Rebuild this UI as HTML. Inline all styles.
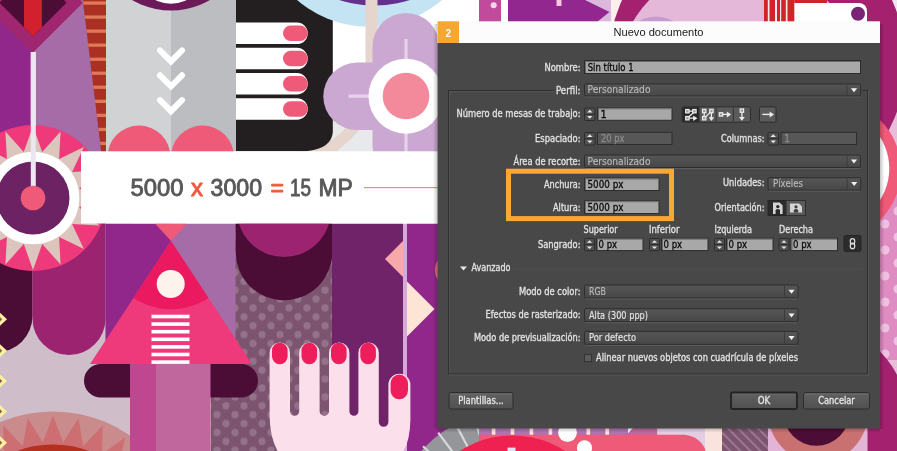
<!DOCTYPE html><html><head><meta charset="utf-8"><title>Nuevo documento</title>
<style>html,body{margin:0;padding:0;background:#fff;overflow:hidden}svg{display:block;will-change:transform}text{font-family:"Liberation Sans",sans-serif}text.d{font-family:"DejaVu Sans Condensed","DejaVu Sans","Liberation Sans",sans-serif}</style></head><body>
<svg width="897" height="451" viewBox="0 0 897 451">
<defs>
<pattern id="dots" x="235" y="290.1" width="18" height="17.8" patternUnits="userSpaceOnUse">
<rect width="18" height="17.8" fill="#7d546f"/><circle cx="9" cy="8.9" r="3.6" fill="#93728a"/><circle cx="0" cy="0" r="3.6" fill="#93728a"/><circle cx="18" cy="0" r="3.6" fill="#93728a"/><circle cx="0" cy="17.8" r="3.6" fill="#93728a"/><circle cx="18" cy="17.8" r="3.6" fill="#93728a"/>
</pattern>
<pattern id="pdots" x="880" y="222" width="26" height="26" patternUnits="userSpaceOnUse">
<rect width="26" height="26" fill="#df8cc3"/><circle cx="5" cy="2" r="4.5" fill="#efc1e0"/><circle cx="5" cy="28" r="4.5" fill="#efc1e0"/><circle cx="18" cy="15" r="4.5" fill="#efc1e0"/>
</pattern>
<pattern id="diag" x="722" y="428" width="7.1" height="7.1" patternUnits="userSpaceOnUse" patternTransform="rotate(-45)">
<rect width="7.1" height="7.1" fill="#7d546f"/><rect width="2" height="7.1" fill="#9a7890"/>
</pattern>
<linearGradient id="dd" x1="0" y1="0" x2="0" y2="1"><stop offset="0" stop-color="#565656"/><stop offset="1" stop-color="#474747"/></linearGradient>
<linearGradient id="btn" x1="0" y1="0" x2="0" y2="1"><stop offset="0" stop-color="#606060"/><stop offset="1" stop-color="#515151"/></linearGradient>
<linearGradient id="shl" x1="0" y1="0" x2="1" y2="0"><stop offset="0" stop-color="#000" stop-opacity="0"/><stop offset="1" stop-color="#000" stop-opacity="0.22"/></linearGradient>
<linearGradient id="shr" x1="1" y1="0" x2="0" y2="0"><stop offset="0" stop-color="#000" stop-opacity="0"/><stop offset="1" stop-color="#000" stop-opacity="0.22"/></linearGradient>
<linearGradient id="shb" x1="0" y1="1" x2="0" y2="0"><stop offset="0" stop-color="#000" stop-opacity="0"/><stop offset="1" stop-color="#000" stop-opacity="0.22"/></linearGradient>
<clipPath id="cv"><rect x="0" y="0" width="897" height="451"/></clipPath>
</defs>
<g clip-path="url(#cv)">
<rect width="897" height="451" fill="#ffffff"/>
<rect x="0" y="0" width="106" height="224" fill="#91278b"/>
<polygon points="33,0 84,0 106,191 106,224 33,224" fill="#a56ca8"/>
<polygon points="82.8,0 106,0 106,191" fill="#a93023"/>
<clipPath id="cs"><polygon points="82.8,0 106,0 106,191"/></clipPath><g clip-path="url(#cs)" fill="#e0785a">
<rect x="80" y="1.4" width="30" height="3.3"/>
<rect x="80" y="15.4" width="30" height="3.3"/>
<rect x="80" y="29.5" width="30" height="3.3"/>
<rect x="80" y="43.5" width="30" height="3.3"/>
<rect x="80" y="57.6" width="30" height="3.3"/>
<rect x="80" y="71.6" width="30" height="3.3"/>
<rect x="80" y="85.6" width="30" height="3.3"/>
<rect x="80" y="99.7" width="30" height="3.3"/>
<rect x="80" y="113.7" width="30" height="3.3"/>
<rect x="80" y="127.8" width="30" height="3.3"/>
<rect x="80" y="141.8" width="30" height="3.3"/>
<rect x="80" y="155.8" width="30" height="3.3"/>
<rect x="80" y="169.9" width="30" height="3.3"/>
<rect x="80" y="183.9" width="30" height="3.3"/>
</g>
<rect x="30.8" y="52" width="5" height="140" fill="#ece6f0"/>
<polygon points="33,52.6 82.9,2.7 33,-47 -17.5,2.7" fill="#a0266f"/>
<polygon points="33,36.2 66.5,2.7 33,-31 -0.5,2.7" fill="#4b0d35"/>
<polygon points="24,0 41.9,0 41.9,27.3 33,36.2 24,27.2" fill="#d2202e"/>
<rect x="106" y="0" width="65" height="152" fill="#d1d2d4"/>
<rect x="171" y="0" width="65" height="152" fill="#bcbdc0"/>
<circle cx="171" cy="-67.9" r="78.3" fill="#6d1a5b"/>
<circle cx="171" cy="-31.7" r="35.4" fill="#ffffff"/>
<polyline points="160,50.4 171,61.4 182,50.4" fill="none" stroke="#fff" stroke-width="6" stroke-linecap="round" stroke-linejoin="miter"/>
<polyline points="160,75.3 171,86.3 182,75.3" fill="none" stroke="#fff" stroke-width="6" stroke-linecap="round" stroke-linejoin="miter"/>
<polyline points="160,100.2 171,111.2 182,100.2" fill="none" stroke="#fff" stroke-width="6" stroke-linecap="round" stroke-linejoin="miter"/>
<circle cx="139" cy="157" r="31.5" fill="#ee5a77"/>
<circle cx="202.5" cy="157" r="31.5" fill="#ee5a77"/>
<rect x="310" y="116" width="70" height="36" fill="#e8e9ea"/>
<path d="M347,126 L363,126 Q351,140 336.5,151.8 L300,151.8 Q332,146 347,126 Z" fill="#e5d5cc"/>
<path d="M236,0 H332.8 V131 C332.8,143 322,151.3 300,151.3 H236 Z" fill="#231f20"/>
<path d="M236,22.6 H297 a10.75 10.75 0 0 1 0 21.5 H236 Z" fill="#fff"/>
<rect x="283" y="25.6" width="24.7" height="15.5" rx="7.75" fill="#ee5a77"/>
<path d="M236,47.8 H297 a10.75 10.75 0 0 1 0 21.5 H236 Z" fill="#fff"/>
<rect x="283" y="50.8" width="24.7" height="15.5" rx="7.75" fill="#ee5a77"/>
<path d="M236,73.0 H297 a10.75 10.75 0 0 1 0 21.5 H236 Z" fill="#fff"/>
<rect x="283" y="76.0" width="24.7" height="15.5" rx="7.75" fill="#ee5a77"/>
<path d="M236,98.2 H297 a10.75 10.75 0 0 1 0 21.5 H236 Z" fill="#fff"/>
<rect x="283" y="101.2" width="24.7" height="15.5" rx="7.75" fill="#ee5a77"/>
<circle cx="369.5" cy="-83.8" r="110.8" fill="#c5e4f3"/>
<circle cx="374.5" cy="-111.8" r="117.3" fill="#65318f"/>
<rect x="365.5" y="0" width="12" height="70" fill="#e5d5cc"/>
<rect x="372.5" y="13" width="67" height="166.6" rx="33.5" fill="#cba8d2"/>
<rect x="323.3" y="62.6" width="166" height="67.4" rx="33.7" fill="#cba8d2"/>
<rect x="404.4" y="39" width="3.2" height="130" fill="#e6d3ea"/>
<rect x="348.6" y="94.5" width="30" height="3.3" fill="#e6d3ea"/>
<circle cx="406" cy="96.2" r="37.5" fill="#fff"/>
<circle cx="406" cy="96" r="23.3" fill="#f38a9c"/>
<rect x="479" y="0" width="22" height="22" fill="#c04a9b"/><circle cx="493.7" cy="5.2" r="3" fill="#f5d5e8"/>
<rect x="585" y="0" width="26" height="22" fill="#dcb8dc"/>
<polygon points="508,0 585,0 609.5,12 597,22 508,22" fill="#92278f"/>
<rect x="556.5" y="0" width="5" height="6" fill="#f9c6dc"/>
<rect x="611" y="0" width="30" height="22" fill="#fdf0ec"/>
<rect x="880" y="0" width="17" height="451" fill="#e7bcd9"/>
<rect x="885" y="0" width="12" height="20" fill="#f3e6ee"/>
<circle cx="757" cy="62" r="148.5" fill="#a3216e"/>
<circle cx="738" cy="84" r="122.2" fill="#e4b8d8"/>
<circle cx="656" cy="52" r="35.5" fill="#c89bcf"/>
<rect x="764" y="0" width="30.5" height="22" fill="#d2232a"/>
<rect x="767.8" y="0" width="1.7" height="22" fill="#fbe9e6"/>
<rect x="775.0" y="0" width="2.0" height="22" fill="#fbe9e6"/>
<rect x="780.0" y="0" width="1.2" height="22" fill="#fbe9e6"/>
<rect x="785.8" y="0" width="1.7" height="22" fill="#fbe9e6"/>
<rect x="794.5" y="0" width="32.5" height="3" fill="#d2232a"/>
<path d="M794.5,3 H859 a8 8 0 0 1 8 8 V22 H794.5 Z" fill="#fff"/>
<circle cx="858" cy="13.7" r="7" fill="#7a2476"/>
<rect x="878" y="160" width="19" height="200" fill="url(#pdots)"/>
<circle cx="831" cy="170" r="70" fill="#ee5a77"/>
<circle cx="831" cy="168.5" r="58.3" fill="#fff"/>
<circle cx="817" cy="416" r="90" fill="#a3216e"/>
<rect x="767.5" y="420" width="100" height="31" fill="#e4b3d8"/>
<circle cx="818" cy="412.7" r="49.9" fill="#c97070"/>
<circle cx="816.4" cy="412.7" r="33.1" fill="#4b0d35"/>
<rect x="0" y="223.5" width="131" height="228" fill="#cfbdca"/>
<clipPath id="cl"><rect x="0" y="0" width="106" height="451"/></clipPath><g clip-path="url(#cl)">
<path d="M-40,223 H32.5 V316 A36.25 36.25 0 0 1 -40 316 Z" fill="#4b0d35"/>
<path d="M32.5,223 H105.5 V318.5 A36.5 36.5 0 0 1 32.5 318.5 Z" fill="#9c2370"/>
<circle cx="33" cy="198" r="73" fill="#ee3a7b"/>
<polygon points="33.0,126.0 42.2,151.9 60.6,131.5 59.1,158.9 83.9,147.1 72.1,171.9 99.5,170.4 79.1,188.8 105.0,198.0 79.1,207.2 99.5,225.6 72.1,224.1 83.9,248.9 59.1,237.1 60.6,264.5 42.2,244.1 33.0,270.0 23.8,244.1 5.4,264.5 6.9,237.1 -17.9,248.9 -6.1,224.1 -33.5,225.6 -13.1,207.2 -39.0,198.0 -13.1,188.8 -33.5,170.4 -6.1,171.9 -17.9,147.1 6.9,158.9 5.4,131.5 23.8,151.9" fill="#dcc5bc"/>
<circle cx="33" cy="198" r="46.3" fill="#fff"/>
<circle cx="33" cy="198" r="36.5" fill="#6d2263"/>
<rect x="30.8" y="52" width="5" height="140" fill="#ece6f0"/>
<circle cx="33" cy="198" r="12.3" fill="#ee5a77"/>
</g>
<circle cx="53" cy="545.7" r="134.3" fill="#c98b8b"/>
<polygon points="53.0,415.7 63.2,442.2 78.4,418.2 83.2,446.2 102.7,425.6 102.0,454.0 125.2,437.6 119.0,465.3 144.9,453.8 133.4,479.7 161.1,473.5 144.7,496.7 173.1,496.0 152.5,515.5 180.5,520.3 156.5,535.5 183.0,545.7 156.5,555.9 180.5,571.1 152.5,575.9 173.1,595.4 144.7,594.7 161.1,617.9 133.4,611.7 144.9,637.6 119.0,626.1 125.2,653.8 102.0,637.4 102.7,665.8 83.2,645.2 78.4,673.2 63.2,649.2 53.0,675.7 42.8,649.2 27.6,673.2 22.8,645.2 3.3,665.8 4.0,637.4 -19.2,653.8 -13.0,626.1 -38.9,637.6 -27.4,611.7 -55.1,617.9 -38.7,594.7 -67.1,595.4 -46.5,575.9 -74.5,571.1 -50.5,555.9 -77.0,545.7 -50.5,535.5 -74.5,520.3 -46.5,515.5 -67.1,496.0 -38.7,496.7 -55.1,473.5 -27.4,479.7 -38.9,453.8 -13.0,465.3 -19.2,437.6 4.0,454.0 3.3,425.6 22.8,446.2 27.6,418.2 42.8,442.2" fill="#cd6e73"/>
<circle cx="53" cy="545.7" r="101.3" fill="#b5301f"/>
<polygon points="-7,319.3 0,312.8 7,319.3 0,325.8" fill="#fbf0a0"/>
<polygon points="-2.2,319.3 0,317.1 2.2,319.3 0,321.5" fill="#8a5a4e"/>
<polygon points="-7,350.7 0,344.2 7,350.7 0,357.2" fill="#fbf0a0"/>
<polygon points="-2.2,350.7 0,348.5 2.2,350.7 0,352.9" fill="#8a5a4e"/>
<polygon points="-7,381.0 0,374.5 7,381.0 0,387.5" fill="#fbf0a0"/>
<polygon points="-2.2,381.0 0,378.8 2.2,381.0 0,383.2" fill="#8a5a4e"/>
<polygon points="-7,411.4 0,404.9 7,411.4 0,417.9" fill="#fbf0a0"/>
<polygon points="-2.2,411.4 0,409.2 2.2,411.4 0,413.6" fill="#8a5a4e"/>
<polygon points="-7,442.8 0,436.3 7,442.8 0,449.3" fill="#fbf0a0"/>
<polygon points="-2.2,442.8 0,440.6 2.2,442.8 0,445.0" fill="#8a5a4e"/>
<rect x="105.5" y="223.5" width="66" height="160" fill="#91278b"/>
<rect x="171" y="223.5" width="65" height="160" fill="#a56ca8"/>
<rect x="210.5" y="380" width="30" height="71" fill="url(#dots)"/>
<rect x="235.5" y="223.5" width="96.5" height="228" fill="url(#dots)"/>
<polygon points="155,223.5 187,223.5 171,241" fill="#ee5a77"/>
<clipPath id="ct"><polygon points="171,241 252,364 90,364"/></clipPath>
<polygon points="171,241 252,364 90,364" fill="#ee3a7b"/>
<circle cx="171" cy="241" r="68.3" fill="#eb1a60" clip-path="url(#ct)"/>
<circle cx="170.7" cy="284" r="14" fill="#fdf3ec"/>
<rect x="151.5" y="314.7" width="38" height="3.6" fill="#fff"/>
<rect x="151.5" y="322.3" width="38" height="3.6" fill="#fff"/>
<rect x="151.5" y="329.9" width="38" height="3.6" fill="#fff"/>
<rect x="151.5" y="337.5" width="38" height="3.6" fill="#fff"/>
<rect x="151.5" y="345.1" width="38" height="3.6" fill="#fff"/>
<rect x="151.5" y="352.7" width="38" height="3.6" fill="#fff"/>
<rect x="151.5" y="360.3" width="38" height="3.6" fill="#fff"/>
<rect x="84" y="364" width="174" height="33.5" rx="16.75" fill="#4b0d35"/>
<rect x="130" y="364" width="26" height="87" fill="#bf4790"/>
<rect x="156" y="364" width="54.5" height="87" fill="#c0689e"/>
<clipPath id="cp"><rect x="235.5" y="223.5" width="96.5" height="228"/></clipPath><g clip-path="url(#cp)">
<circle cx="284" cy="252" r="48.3" fill="#4b0d35"/><rect x="235.5" y="223" width="96.5" height="29" fill="#4b0d35"/>
<circle cx="284" cy="210" r="47" fill="#9c2370"/></g>
<rect x="332" y="223.5" width="71" height="228" fill="#71236a"/>
<rect x="403" y="223.5" width="4" height="228" fill="#d5a9d8"/>
<rect x="407" y="223.5" width="50" height="228" fill="#91278b"/>
<polygon points="403,241 385,259 403,277" fill="#f7a8a8"/>
<polygon points="407,281.5 434.5,309 407,336.5" fill="#fde4d4"/>
<circle cx="453" cy="270" r="18" fill="#e9717a"/>
<circle cx="512.5" cy="532" r="122" fill="#959699"/>
<line x1="435.0" y1="478.8" x2="410.3" y2="461.8" stroke="#d8d8db" stroke-width="2.2"/>
<line x1="444.7" y1="466.9" x2="423.0" y2="446.2" stroke="#d8d8db" stroke-width="2.2"/>
<line x1="456.2" y1="456.7" x2="438.2" y2="432.7" stroke="#d8d8db" stroke-width="2.2"/>
<line x1="468.7" y1="448.8" x2="454.7" y2="422.3" stroke="#d8d8db" stroke-width="2.2"/>
<line x1="482.5" y1="442.9" x2="472.9" y2="414.5" stroke="#d8d8db" stroke-width="2.2"/>
<line x1="497.1" y1="439.3" x2="492.2" y2="409.7" stroke="#d8d8db" stroke-width="2.2"/>
<path d="M269.6,352.8 a10.2 10.2 0 0 1 20.4 0 V411.2 a4.6 4.6 0 0 0 9.2 0 V352.8 a10.2 10.2 0 0 1 20.4 0 V411.2 a4.7 4.7 0 0 0 9.4 0 V352.8 a10.2 10.2 0 0 1 20.4 0 V411.2 a4.5 4.5 0 0 0 9 0 V352.8 a10.2 10.2 0 0 1 20.4 0 V422 a4.8 4.8 0 0 0 9.6 0 V384.7 a11 11 0 0 1 22 0 V420 Q410,440 403.5,451 H277.5 Q269.6,436 269.6,415 Z" fill="#fbe0ec"/>
<rect x="272.0" y="342.8" width="15.6" height="21.5" rx="7.8" fill="#ee1e5c"/>
<rect x="301.5" y="342.8" width="15.6" height="21.5" rx="7.8" fill="#ee1e5c"/>
<rect x="331.0" y="342.8" width="15.6" height="21.5" rx="7.8" fill="#ee1e5c"/>
<rect x="360.3" y="342.8" width="15.6" height="21.5" rx="7.8" fill="#ee1e5c"/>
<rect x="390.6" y="374.6" width="17.4" height="24.6" rx="8.7" fill="#ee1e5c"/>
<rect x="479" y="427" width="149" height="8" fill="#ad74b2"/>
<rect x="491.8" y="427" width="3.6" height="8" fill="#fde4d4"/>
<rect x="510.7" y="427" width="3.6" height="8" fill="#fde4d4"/>
<rect x="529.6" y="427" width="3.6" height="8" fill="#fde4d4"/>
<rect x="548.6" y="427" width="3.6" height="8" fill="#fde4d4"/>
<rect x="567.5" y="427" width="3.6" height="8" fill="#fde4d4"/>
<rect x="586.5" y="427" width="3.6" height="8" fill="#fde4d4"/>
<rect x="605.4" y="427" width="3.6" height="8" fill="#fde4d4"/>
<polygon points="634,427 657.5,427 657.5,435.2 626,435.2" fill="#c0689e"/>
<rect x="657.5" y="427" width="48" height="24" fill="#e3cde4"/>
<path d="M479,434.8 H685 Q700,436.5 706,451 H479 Z" fill="#ee5a77"/>
<circle cx="512.5" cy="532" r="96.6" fill="#ee2150"/>
<circle cx="567.5" cy="432.6" r="9.4" fill="#fff"/><circle cx="584.5" cy="447.8" r="7.6" fill="#fff"/>
<rect x="507.5" y="447.6" width="8" height="4" fill="#e4dcf0"/>
<rect x="705.5" y="427" width="16.5" height="24" fill="#f9e3dc"/>
<rect x="722" y="427" width="46" height="24" fill="url(#diag)"/>
<rect x="81" y="151.3" width="360" height="72.2" fill="#fff"/>
<text x="130.6" y="195.6" textLength="52.9" lengthAdjust="spacingAndGlyphs" fill="#58585a" stroke="#58585a" font-size="23" stroke-width="0.9" stroke-linejoin="round">5000</text>
<text x="191.0" y="195.6" textLength="12.0" lengthAdjust="spacingAndGlyphs" fill="#ef5a3c" stroke="#ef5a3c" font-size="23" stroke-width="0.9" stroke-linejoin="round">x</text>
<text x="210.6" y="195.6" textLength="51.4" lengthAdjust="spacingAndGlyphs" fill="#58585a" stroke="#58585a" font-size="23" stroke-width="0.9" stroke-linejoin="round">3000</text>
<text x="270.5" y="195.6" textLength="13.5" lengthAdjust="spacingAndGlyphs" fill="#ef5a3c" stroke="#ef5a3c" font-size="23" stroke-width="0.9" stroke-linejoin="round">=</text>
<text x="290.0" y="195.6" textLength="21.0" lengthAdjust="spacingAndGlyphs" fill="#58585a" stroke="#58585a" font-size="23" stroke-width="0.9" stroke-linejoin="round">15</text>
<text x="318.4" y="195.6" textLength="34.3" lengthAdjust="spacingAndGlyphs" fill="#58585a" stroke="#58585a" font-size="23" stroke-width="0.9" stroke-linejoin="round">MP</text>
<rect x="364" y="187" width="145" height="1.2" fill="#f08a72"/>
<rect x="433" y="24" width="4.5" height="405" fill="url(#shl)"/>
<rect x="880" y="24" width="4.5" height="405" fill="url(#shr)"/>
<rect x="437.5" y="428.2" width="442.5" height="4.5" fill="url(#shb)"/>
<rect x="437.5" y="21.3" width="442.5" height="22" fill="#fcfcfc"/>
<rect x="437.5" y="43" width="442.5" height="385.5" fill="#484848"/>
<rect x="437.5" y="21.3" width="21.5" height="21.7" fill="#f5a733"/>
<text x="448.2" y="37.2" text-anchor="middle" font-size="10" font-weight="bold" fill="#fff">2</text>
<text x="613.5" y="35.5" font-size="11.6" textLength="90" lengthAdjust="spacingAndGlyphs" fill="#1a1a1a">Nuevo documento</text>
<path d="M554,90.5 H448.5 V374 H867.5 V90.5 H862" fill="none" stroke="#2f2f2f" stroke-width="1"/>
<path d="M554,91.5 H449.5 V373 M449,375 H868.5 V91" fill="none" stroke="#5b5b5b" stroke-width="1" opacity="0.7"/>
<rect x="514" y="268.5" width="349" height="1" fill="#4f4f4f"/>
<text x="580.5" y="70.5" text-anchor="end" font-size="9.7" fill="#e2e2e2" class="d" textLength="36.0" lengthAdjust="spacingAndGlyphs" stroke="#e2e2e2" stroke-width="0.3">Nombre:</text>
<rect x="584.5" y="60.5" width="276.0" height="13.0" fill="#a8a8a8" stroke="#2c2c2c" stroke-width="1"/>
<path d="M585.5,73.0 V61.5 H860.0" fill="none" stroke="#6a6a6a" stroke-width="1"/>
<text x="587.7" y="70.7" text-anchor="start" font-size="10.9" fill="#0a0a0a" class="d" textLength="46.0" lengthAdjust="spacingAndGlyphs" stroke="#0a0a0a" stroke-width="0.3">Sin título 1</text>
<text x="580.5" y="93.6" text-anchor="end" font-size="9.7" fill="#e2e2e2" class="d" textLength="24.5" lengthAdjust="spacingAndGlyphs" stroke="#e2e2e2" stroke-width="0.3">Perfil:</text>
<rect x="584.5" y="84.0" width="276.0" height="12.0" rx="1.5" fill="url(#dd)" stroke="#2d2d2d" stroke-width="1"/>
<rect x="585.5" y="96.5" width="274.0" height="1" fill="#636363" opacity="0.8"/>
<line x1="847.0" y1="85.0" x2="847.0" y2="95.0" stroke="#3a3a3a" stroke-width="1"/>
<polygon points="850.9,88.2 857.1,88.2 854.0,92.2" fill="#f2f2f2"/>
<text x="587.5" y="93.0" text-anchor="start" font-size="10.3" fill="#b8b8b8" class="d" textLength="63.0" lengthAdjust="spacingAndGlyphs" stroke="#b8b8b8" stroke-width="0.15">Personalizado</text>
<text x="580.5" y="116.6" text-anchor="end" font-size="9.7" fill="#e2e2e2" class="d" textLength="124.0" lengthAdjust="spacingAndGlyphs" stroke="#e2e2e2" stroke-width="0.3">Número de mesas de trabajo:</text>
<rect x="584.5" y="108.0" width="10.5" height="12.5" rx="1" fill="#505050" stroke="#2c2c2c" stroke-width="1"/>
<rect x="585.0" y="113.8" width="9.5" height="1" fill="#2c2c2c"/>
<polygon points="587.1,112.5 592.4,112.5 589.8,109.8" fill="#e8e8e8"/>
<polygon points="587.1,116.0 592.4,116.0 589.8,118.7" fill="#e8e8e8"/>
<rect x="597.5" y="107.8" width="74.5" height="12.5" fill="#a8a8a8" stroke="#2c2c2c" stroke-width="1"/>
<path d="M598.5,119.8 V108.8 H671.5" fill="none" stroke="#6a6a6a" stroke-width="1"/>
<text x="600.5" y="117.5" text-anchor="start" font-size="10.9" fill="#0a0a0a" class="d" stroke="#0a0a0a" stroke-width="0.3">1</text>
<text x="580.5" y="141.6" text-anchor="end" font-size="9.7" fill="#e2e2e2" class="d" textLength="45.5" lengthAdjust="spacingAndGlyphs" stroke="#e2e2e2" stroke-width="0.3">Espaciado:</text>
<rect x="584.5" y="132.5" width="10.5" height="12.5" rx="1" fill="#505050" stroke="#2c2c2c" stroke-width="1"/>
<rect x="585.0" y="138.2" width="9.5" height="1" fill="#2c2c2c"/>
<polygon points="587.1,136.9 592.4,136.9 589.8,134.3" fill="#e8e8e8"/>
<polygon points="587.1,140.6 592.4,140.6 589.8,143.2" fill="#e8e8e8"/>
<rect x="597.5" y="132.3" width="74.5" height="12.2" fill="#575757" stroke="#2c2c2c" stroke-width="1"/>
<text x="601.0" y="141.7" text-anchor="start" font-size="10.9" fill="#8a8a8a" class="d" textLength="23.5" lengthAdjust="spacingAndGlyphs" stroke="#8a8a8a" stroke-width="0.3">20 px</text>
<text x="764.5" y="141.6" text-anchor="end" font-size="9.7" fill="#e2e2e2" class="d" textLength="43.5" lengthAdjust="spacingAndGlyphs" stroke="#e2e2e2" stroke-width="0.3">Columnas:</text>
<rect x="768.0" y="132.5" width="10.5" height="12.5" rx="1" fill="#505050" stroke="#2c2c2c" stroke-width="1"/>
<rect x="768.5" y="138.2" width="9.5" height="1" fill="#2c2c2c"/>
<polygon points="770.6,136.9 775.9,136.9 773.2,134.3" fill="#e8e8e8"/>
<polygon points="770.6,140.6 775.9,140.6 773.2,143.2" fill="#e8e8e8"/>
<rect x="781.0" y="132.3" width="75.5" height="12.2" fill="#575757" stroke="#2c2c2c" stroke-width="1"/>
<text x="784.0" y="141.7" text-anchor="start" font-size="10.9" fill="#8a8a8a" class="d" stroke="#8a8a8a" stroke-width="0.3">1</text>
<text x="580.5" y="165.0" text-anchor="end" font-size="9.7" fill="#e2e2e2" class="d" textLength="67.0" lengthAdjust="spacingAndGlyphs" stroke="#e2e2e2" stroke-width="0.3">Área de recorte:</text>
<rect x="584.5" y="155.0" width="276.0" height="12.5" rx="1.5" fill="url(#dd)" stroke="#2d2d2d" stroke-width="1"/>
<rect x="585.5" y="168.0" width="274.0" height="1" fill="#636363" opacity="0.8"/>
<line x1="847.0" y1="156.0" x2="847.0" y2="166.5" stroke="#3a3a3a" stroke-width="1"/>
<polygon points="850.9,159.4 857.1,159.4 854.0,163.4" fill="#f2f2f2"/>
<text x="587.5" y="164.5" text-anchor="start" font-size="10.3" fill="#b8b8b8" class="d" textLength="63.0" lengthAdjust="spacingAndGlyphs" stroke="#b8b8b8" stroke-width="0.15">Personalizado</text>
<text x="580.5" y="187.5" text-anchor="end" font-size="9.7" fill="#e2e2e2" class="d" textLength="36.5" lengthAdjust="spacingAndGlyphs" stroke="#e2e2e2" stroke-width="0.3">Anchura:</text>
<rect x="584.5" y="178.0" width="74.5" height="12.5" fill="#a8a8a8" stroke="#2c2c2c" stroke-width="1"/>
<path d="M585.5,190.0 V179.0 H658.5" fill="none" stroke="#6a6a6a" stroke-width="1"/>
<text x="587.5" y="187.7" text-anchor="start" font-size="10.9" fill="#0a0a0a" class="d" textLength="36.0" lengthAdjust="spacingAndGlyphs" stroke="#0a0a0a" stroke-width="0.3">5000 px</text>
<text x="580.5" y="210.5" text-anchor="end" font-size="9.7" fill="#e2e2e2" class="d" textLength="27.5" lengthAdjust="spacingAndGlyphs" stroke="#e2e2e2" stroke-width="0.3">Altura:</text>
<rect x="584.5" y="200.7" width="74.5" height="12.8" fill="#a8a8a8" stroke="#2c2c2c" stroke-width="1"/>
<path d="M585.5,213.0 V201.7 H658.5" fill="none" stroke="#6a6a6a" stroke-width="1"/>
<text x="587.5" y="210.7" text-anchor="start" font-size="10.9" fill="#0a0a0a" class="d" textLength="36.0" lengthAdjust="spacingAndGlyphs" stroke="#0a0a0a" stroke-width="0.3">5000 px</text>
<text x="764.5" y="186.0" text-anchor="end" font-size="9.7" fill="#e2e2e2" class="d" textLength="41.5" lengthAdjust="spacingAndGlyphs" stroke="#e2e2e2" stroke-width="0.3">Unidades:</text>
<rect x="768.0" y="177.7" width="92.7" height="12.5" rx="1.5" fill="url(#dd)" stroke="#2d2d2d" stroke-width="1"/>
<rect x="769.0" y="190.7" width="90.7" height="1" fill="#636363" opacity="0.8"/>
<line x1="847.2" y1="178.7" x2="847.2" y2="189.2" stroke="#3a3a3a" stroke-width="1"/>
<polygon points="851.1,182.1 857.3,182.1 854.2,186.1" fill="#f2f2f2"/>
<text x="773.0" y="187.2" text-anchor="start" font-size="10.3" fill="#b8b8b8" class="d" textLength="30.0" lengthAdjust="spacingAndGlyphs" stroke="#b8b8b8" stroke-width="0.15">Píxeles</text>
<text x="764.5" y="210.5" text-anchor="end" font-size="9.7" fill="#e2e2e2" class="d" textLength="50.0" lengthAdjust="spacingAndGlyphs" stroke="#e2e2e2" stroke-width="0.3">Orientación:</text>
<rect x="768" y="200.5" width="18" height="15" fill="#2b2b2b" stroke="#262626"/>
<rect x="786" y="200.5" width="19.5" height="15" fill="#5a5a5a" stroke="#2e2e2e"/>
<path d="M773,202.4 h6.6 l3,3 v8.6 h-9.6 z" fill="#d4d4d4"/><circle cx="777.8" cy="206.6" r="1.7" fill="#2a2a2a"/><path d="M775.6,214 v-4 q2.2,-2.2 4.4,0 v4 z" fill="#2a2a2a"/>
<path d="M790,203.4 h9 l3,3 v6.2 h-12 z" fill="#d4d4d4"/><circle cx="796" cy="206.8" r="1.6" fill="#3c3c3c"/><path d="M793.8,212.6 v-2.6 q2.2,-2 4.4,0 v2.6 z" fill="#3c3c3c"/>
<rect x="508.5" y="171.2" width="163" height="47.4" fill="none" stroke="#f9a932" stroke-width="5"/>
<text x="583.6" y="233.4" text-anchor="start" font-size="9.7" fill="#e2e2e2" class="d" textLength="34.0" lengthAdjust="spacingAndGlyphs" stroke="#e2e2e2" stroke-width="0.3">Superior</text>
<text x="649.0" y="233.4" text-anchor="start" font-size="9.7" fill="#e2e2e2" class="d" textLength="30.5" lengthAdjust="spacingAndGlyphs" stroke="#e2e2e2" stroke-width="0.3">Inferior</text>
<text x="714.5" y="233.4" text-anchor="start" font-size="9.7" fill="#e2e2e2" class="d" textLength="37.5" lengthAdjust="spacingAndGlyphs" stroke="#e2e2e2" stroke-width="0.3">Izquierda</text>
<text x="779.0" y="233.4" text-anchor="start" font-size="9.7" fill="#e2e2e2" class="d" textLength="34.0" lengthAdjust="spacingAndGlyphs" stroke="#e2e2e2" stroke-width="0.3">Derecha</text>
<text x="580.5" y="247.5" text-anchor="end" font-size="9.7" fill="#e2e2e2" class="d" textLength="42.5" lengthAdjust="spacingAndGlyphs" stroke="#e2e2e2" stroke-width="0.3">Sangrado:</text>
<rect x="584.5" y="238.5" width="10.0" height="12.2" rx="1" fill="#505050" stroke="#2c2c2c" stroke-width="1"/>
<rect x="585.0" y="244.1" width="9.0" height="1" fill="#2c2c2c"/>
<polygon points="586.9,242.8 592.1,242.8 589.5,240.3" fill="#e8e8e8"/>
<polygon points="586.9,246.4 592.1,246.4 589.5,248.9" fill="#e8e8e8"/>
<rect x="596.5" y="238.2" width="46.5" height="12.4" fill="#a8a8a8" stroke="#2c2c2c" stroke-width="1"/>
<path d="M597.5,250.1 V239.2 H642.5" fill="none" stroke="#6a6a6a" stroke-width="1"/>
<text x="598.5" y="247.8" text-anchor="start" font-size="10.9" fill="#0a0a0a" class="d" textLength="18.6" lengthAdjust="spacingAndGlyphs" stroke="#0a0a0a" stroke-width="0.3">0 px</text>
<rect x="649.5" y="238.5" width="10.0" height="12.2" rx="1" fill="#505050" stroke="#2c2c2c" stroke-width="1"/>
<rect x="650.0" y="244.1" width="9.0" height="1" fill="#2c2c2c"/>
<polygon points="651.9,242.8 657.1,242.8 654.5,240.3" fill="#e8e8e8"/>
<polygon points="651.9,246.4 657.1,246.4 654.5,248.9" fill="#e8e8e8"/>
<rect x="661.5" y="238.2" width="46.5" height="12.4" fill="#a8a8a8" stroke="#2c2c2c" stroke-width="1"/>
<path d="M662.5,250.1 V239.2 H707.5" fill="none" stroke="#6a6a6a" stroke-width="1"/>
<text x="663.5" y="247.8" text-anchor="start" font-size="10.9" fill="#0a0a0a" class="d" textLength="18.6" lengthAdjust="spacingAndGlyphs" stroke="#0a0a0a" stroke-width="0.3">0 px</text>
<rect x="714.5" y="238.5" width="10.0" height="12.2" rx="1" fill="#505050" stroke="#2c2c2c" stroke-width="1"/>
<rect x="715.0" y="244.1" width="9.0" height="1" fill="#2c2c2c"/>
<polygon points="716.9,242.8 722.1,242.8 719.5,240.3" fill="#e8e8e8"/>
<polygon points="716.9,246.4 722.1,246.4 719.5,248.9" fill="#e8e8e8"/>
<rect x="726.5" y="238.2" width="46.5" height="12.4" fill="#a8a8a8" stroke="#2c2c2c" stroke-width="1"/>
<path d="M727.5,250.1 V239.2 H772.5" fill="none" stroke="#6a6a6a" stroke-width="1"/>
<text x="728.5" y="247.8" text-anchor="start" font-size="10.9" fill="#0a0a0a" class="d" textLength="18.6" lengthAdjust="spacingAndGlyphs" stroke="#0a0a0a" stroke-width="0.3">0 px</text>
<rect x="779.0" y="238.5" width="10.0" height="12.2" rx="1" fill="#505050" stroke="#2c2c2c" stroke-width="1"/>
<rect x="779.5" y="244.1" width="9.0" height="1" fill="#2c2c2c"/>
<polygon points="781.4,242.8 786.6,242.8 784.0,240.3" fill="#e8e8e8"/>
<polygon points="781.4,246.4 786.6,246.4 784.0,248.9" fill="#e8e8e8"/>
<rect x="791.0" y="238.2" width="46.5" height="12.4" fill="#a8a8a8" stroke="#2c2c2c" stroke-width="1"/>
<path d="M792.0,250.1 V239.2 H837.0" fill="none" stroke="#6a6a6a" stroke-width="1"/>
<text x="793.0" y="247.8" text-anchor="start" font-size="10.9" fill="#0a0a0a" class="d" textLength="18.6" lengthAdjust="spacingAndGlyphs" stroke="#0a0a0a" stroke-width="0.3">0 px</text>
<rect x="844" y="235.5" width="17" height="16" rx="1.5" fill="#2c2c2c" stroke="#252525"/>
<rect x="850.3" y="238.6" width="4.4" height="5.4" rx="2.2" fill="none" stroke="#e0e0e0" stroke-width="1.2"/><rect x="850.3" y="243.2" width="4.4" height="5.4" rx="2.2" fill="none" stroke="#e0e0e0" stroke-width="1.2"/>
<polygon points="460,266.5 467,266.5 463.5,270.5" fill="#e8e8e8"/>
<text x="471.5" y="271.0" text-anchor="start" font-size="9.7" fill="#e2e2e2" class="d" textLength="39.0" lengthAdjust="spacingAndGlyphs" stroke="#e2e2e2" stroke-width="0.3">Avanzado</text>
<text x="580.5" y="295.4" text-anchor="end" font-size="9.7" fill="#e2e2e2" class="d" textLength="61.5" lengthAdjust="spacingAndGlyphs" stroke="#e2e2e2" stroke-width="0.3">Modo de color:</text>
<rect x="584.5" y="285.0" width="213.5" height="13.0" rx="1.5" fill="url(#dd)" stroke="#2d2d2d" stroke-width="1"/>
<rect x="585.5" y="298.5" width="211.5" height="1" fill="#636363" opacity="0.8"/>
<line x1="784.5" y1="286.0" x2="784.5" y2="297.0" stroke="#3a3a3a" stroke-width="1"/>
<polygon points="788.4,289.7 794.6,289.7 791.5,293.7" fill="#f2f2f2"/>
<text x="589.0" y="295.0" text-anchor="start" font-size="10.3" fill="#b8b8b8" class="d" textLength="17.0" lengthAdjust="spacingAndGlyphs" stroke="#b8b8b8" stroke-width="0.15">RGB</text>
<text x="580.5" y="318.0" text-anchor="end" font-size="9.7" fill="#e2e2e2" class="d" textLength="95.0" lengthAdjust="spacingAndGlyphs" stroke="#e2e2e2" stroke-width="0.3">Efectos de rasterizado:</text>
<rect x="584.5" y="308.7" width="213.5" height="13.0" rx="1.5" fill="url(#dd)" stroke="#2d2d2d" stroke-width="1"/>
<rect x="585.5" y="322.2" width="211.5" height="1" fill="#636363" opacity="0.8"/>
<line x1="784.5" y1="309.7" x2="784.5" y2="320.7" stroke="#3a3a3a" stroke-width="1"/>
<polygon points="788.4,313.4 794.6,313.4 791.5,317.4" fill="#f2f2f2"/>
<text x="589.0" y="318.7" text-anchor="start" font-size="10.3" fill="#e4e4e4" class="d" textLength="59.0" lengthAdjust="spacingAndGlyphs" stroke="#e4e4e4" stroke-width="0.15">Alta (300 ppp)</text>
<text x="580.5" y="340.8" text-anchor="end" font-size="9.7" fill="#e2e2e2" class="d" textLength="106.5" lengthAdjust="spacingAndGlyphs" stroke="#e2e2e2" stroke-width="0.3">Modo de previsualización:</text>
<rect x="584.5" y="331.4" width="213.5" height="13.0" rx="1.5" fill="url(#dd)" stroke="#2d2d2d" stroke-width="1"/>
<rect x="585.5" y="344.9" width="211.5" height="1" fill="#636363" opacity="0.8"/>
<line x1="784.5" y1="332.4" x2="784.5" y2="343.4" stroke="#3a3a3a" stroke-width="1"/>
<polygon points="788.4,336.1 794.6,336.1 791.5,340.1" fill="#f2f2f2"/>
<text x="589.0" y="341.4" text-anchor="start" font-size="10.3" fill="#e4e4e4" class="d" textLength="47.0" lengthAdjust="spacingAndGlyphs" stroke="#e4e4e4" stroke-width="0.15">Por defecto</text>
<rect x="584.5" y="354.6" width="7" height="7" fill="#5c5c5c" stroke="#333" stroke-width="1"/>
<text x="596.0" y="361.2" text-anchor="start" font-size="9.7" fill="#e2e2e2" class="d" textLength="202.0" lengthAdjust="spacingAndGlyphs" stroke="#e2e2e2" stroke-width="0.3">Alinear nuevos objetos con cuadrícula de píxeles</text>
<g transform="translate(0,0.6)">
<rect x="682" y="106.2" width="68.5" height="15.4" rx="1.5" fill="#5b5b5b" stroke="#2c2c2c"/>
<rect x="682.5" y="106.7" width="16.5" height="14.4" fill="#262626"/>
<line x1="699.0" y1="106.7" x2="699.0" y2="121.1" stroke="#333" stroke-width="1"/>
<line x1="716.2" y1="106.7" x2="716.2" y2="121.1" stroke="#333" stroke-width="1"/>
<line x1="733.3" y1="106.7" x2="733.3" y2="121.1" stroke="#333" stroke-width="1"/>
<path d="M689,110.6 H693 M693.4,112.2 L688.8,116.2 M689,117.6 H694" fill="none" stroke="#ececec" stroke-width="1.3"/>
<rect x="685.7" y="108.9" width="3.4" height="3.4" fill="#9a9a9a" stroke="#ececec" stroke-width="1.2"/>
<rect x="692.7" y="108.9" width="3.4" height="3.4" fill="#9a9a9a" stroke="#ececec" stroke-width="1.2"/>
<rect x="685.7" y="115.9" width="3.4" height="3.4" fill="#9a9a9a" stroke="#ececec" stroke-width="1.2"/>
<polygon points="693.2,114.8 697.4,117.6 693.2,120.4" fill="#ececec"/>
<path d="M704.2,112 V116 M705.8,116 L710,112 M711.4,112 V117.5" fill="none" stroke="#ececec" stroke-width="1.3"/>
<rect x="702.5" y="108.7" width="3.4" height="3.4" fill="#9a9a9a" stroke="#ececec" stroke-width="1.2"/>
<rect x="709.7" y="108.7" width="3.4" height="3.4" fill="#9a9a9a" stroke="#ececec" stroke-width="1.2"/>
<rect x="702.5" y="115.9" width="3.4" height="3.4" fill="#9a9a9a" stroke="#ececec" stroke-width="1.2"/>
<polygon points="708.6,116.6 714.2,116.6 711.4,120.4" fill="#ececec"/>
<path d="M722.6,113.8 H728" fill="none" stroke="#ececec" stroke-width="1.3"/>
<rect x="719.3" y="112.1" width="3.4" height="3.4" fill="#9a9a9a" stroke="#ececec" stroke-width="1.2"/>
<polygon points="726.8,110.8 731.2,113.8 726.8,116.8" fill="#ececec"/>
<path d="M741.9,111.6 V117" fill="none" stroke="#ececec" stroke-width="1.3"/>
<rect x="740.2" y="108.3" width="3.4" height="3.4" fill="#9a9a9a" stroke="#ececec" stroke-width="1.2"/>
<polygon points="739,116.4 744.8,116.4 741.9,120.2" fill="#ececec"/>
<rect x="759.5" y="106.2" width="16.5" height="15.4" rx="1.5" fill="#5b5b5b" stroke="#2c2c2c"/>
<path d="M762.3,113.8 H771" stroke="#ececec" stroke-width="1.4"/><polygon points="769.6,110.8 774,113.8 769.6,116.8" fill="#ececec"/>
</g>
<rect x="449.0" y="392.5" width="64.0" height="16.5" rx="2" fill="url(#btn)" stroke="#2d2d2d" stroke-width="1"/>
<rect x="450.5" y="393.7" width="61.0" height="1" fill="#6e6e6e" opacity="0.8"/>
<text x="481.0" y="404.2" text-anchor="middle" class="d" font-size="9.7" stroke="#e6e6e6" stroke-width="0.3" fill="#e6e6e6" textLength="45.5" lengthAdjust="spacingAndGlyphs">Plantillas...</text>
<rect x="731.0" y="392.5" width="66.0" height="16.5" rx="2" fill="url(#btn)" stroke="#232323" stroke-width="1.8"/>
<rect x="732.5" y="393.7" width="63.0" height="1" fill="#6e6e6e" opacity="0.8"/>
<text x="764.0" y="404.2" text-anchor="middle" class="d" font-size="9.7" stroke="#e6e6e6" stroke-width="0.3" fill="#e6e6e6" textLength="12.5" lengthAdjust="spacingAndGlyphs">OK</text>
<rect x="803.5" y="392.5" width="66.0" height="16.5" rx="2" fill="url(#btn)" stroke="#2d2d2d" stroke-width="1"/>
<rect x="805.0" y="393.7" width="63.0" height="1" fill="#6e6e6e" opacity="0.8"/>
<text x="836.5" y="404.2" text-anchor="middle" class="d" font-size="9.7" stroke="#e6e6e6" stroke-width="0.3" fill="#e6e6e6" textLength="36.5" lengthAdjust="spacingAndGlyphs">Cancelar</text>
</g></svg></body></html>
